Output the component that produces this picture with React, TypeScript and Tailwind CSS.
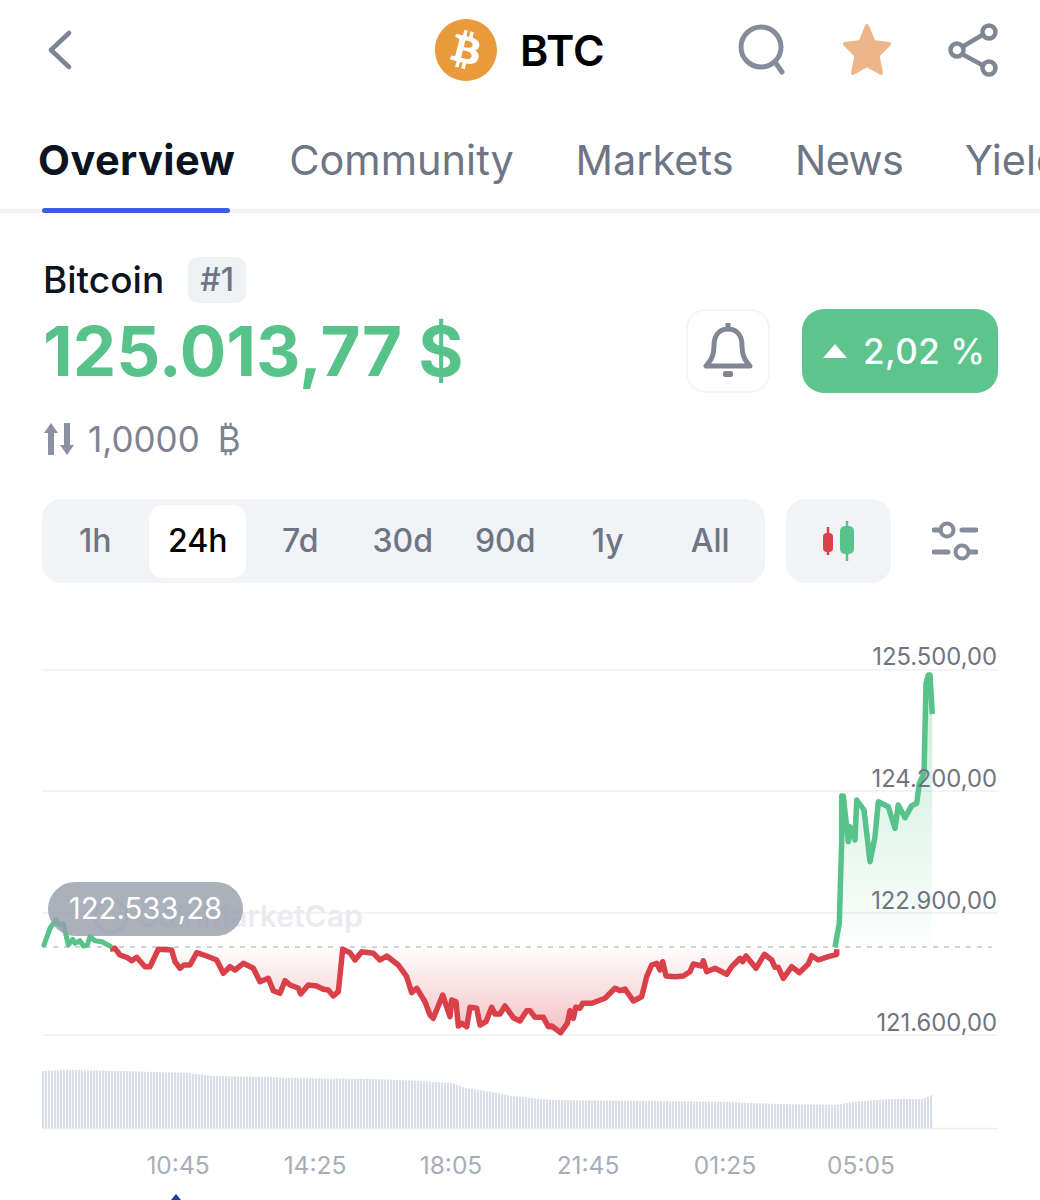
import { FaBitcoin } from 'react-icons/fa';

type Pt = [number, number];

// points read off the chart, in crop coordinates at 3x
const trace = (ox: number, oy: number, pts: Pt[]): Pt[] => pts.map(([x, y]) => [ox + x / 3, oy + y / 3]);

const greenStart = trace(30, 870, [
  [42, 225], [60, 175], [78, 150], [88, 165], [100, 160], [115, 225], [128, 208], [135, 220], [150, 212], [160, 228],
  [172, 225], [180, 200], [195, 212], [215, 215], [240, 228],
]);

const redLeft = trace(30, 870, [
  [240, 238], [255, 235], [270, 255], [290, 262], [305, 272], [320, 262], [345, 290], [360, 290], [385, 238], [425, 240],
  [435, 275], [450, 295], [462, 285], [480, 285], [500, 248], [530, 258], [560, 270], [580, 310], [600, 290], [615, 300],
  [640, 280], [670, 295], [690, 335], [715, 325], [730, 362], [750, 370], [765, 332], [780, 345], [805, 355], [812, 372],
  [835, 345], [860, 348], [880, 358], [895, 360], [910, 378], [925, 365], [938, 238], [960, 248], [975, 270], [995, 245],
  [1030, 250], [1050, 270], [1070, 258], [1105, 285], [1130, 320], [1145, 368], [1160, 355], [1185, 395],
]);

const redRight = trace(430, 920, [
  [0, 285], [10, 295], [38, 225], [60, 290], [65, 240], [78, 245], [85, 318], [95, 310], [110, 320], [120, 262],
  [140, 265], [150, 315], [168, 305], [185, 262], [195, 282], [210, 282], [225, 258], [250, 293], [270, 303], [290, 272],
  [300, 272], [315, 292], [340, 292], [355, 320], [365, 318], [392, 338], [412, 310], [420, 272], [430, 295], [437, 262],
  [450, 265], [458, 250], [485, 250], [525, 235], [555, 205], [570, 212], [585, 207], [610, 243], [635, 230], [650, 170],
  [665, 135], [680, 130], [690, 150], [698, 125], [708, 168], [735, 170], [760, 168], [780, 155], [790, 132], [815, 138],
  [820, 122], [830, 155], [855, 145], [890, 163], [905, 140], [930, 115], [938, 125], [948, 108], [978, 145], [1003, 103],
  [1025, 120], [1035, 142], [1045, 142], [1060, 175], [1085, 140], [1108, 158], [1135, 132], [1145, 107], [1165, 120], [1195, 110],
  [1220, 103], [1220, 88],
]);

const greenEnd = trace(800, 640, [
  [105, 922], [118, 850], [125, 600], [125, 468], [130, 468], [145, 605], [150, 560], [165, 600], [170, 480], [192, 510],
  [210, 665], [225, 590], [235, 485], [265, 500], [285, 565], [295, 495], [315, 533], [335, 497], [350, 490], [358, 430],
  [372, 400], [378, 130], [385, 105], [390, 105], [397, 222],
]);

const red = [...redLeft, ...redRight];
const toLine = (pts: Pt[]) => pts.map(([x, y]) => `${x.toFixed(1)},${y.toFixed(1)}`).join(' ');

const volumeTop: Pt[] = [
  [42, 1071], [66, 1070], [119, 1071], [186, 1073], [212, 1076], [265, 1077], [285, 1078], [371, 1079], [398, 1080], [451, 1083],
  [464, 1088], [491, 1092], [511, 1096], [550, 1100], [729, 1102], [776, 1104], [835, 1105], [852, 1102], [889, 1099], [922, 1099],
  [933, 1094],
];

const volumeAt = (x: number) => {
  for (let i = 1; i < volumeTop.length; i++) {
    const [x0, y0] = volumeTop[i - 1];
    const [x1, y1] = volumeTop[i];
    if (x <= x1) return y0 + ((x - x0) / (x1 - x0)) * (y1 - y0);
  }
  return 1094;
};

const bars = Array.from({ length: 297 }, (_, i) => 42 + i * 3);

const grid = [670, 791, 913, 1035];
const prices = [
  { label: '125.500,00', cls: 'top-[41px]' },
  { label: '124.200,00', cls: 'top-[163px]' },
  { label: '122.900,00', cls: 'top-[285px]' },
  { label: '121.600,00', cls: 'top-[407px]' },
];

const tabs = [
  { label: 'Community', cls: '' },
  { label: 'Markets', cls: '' },
  { label: 'News', cls: 'tracking-[-0.6px]' },
  { label: 'Yield', cls: '' },
];
const ranges = ['1h', '24h', '7d', '30d', '90d', '1y', 'All'];
const times = [
  { label: '10:45', cls: 'left-[178px]' },
  { label: '14:25', cls: 'left-[315px]' },
  { label: '18:05', cls: 'left-[451px]' },
  { label: '21:45', cls: 'left-[588px]' },
  { label: '01:25', cls: 'left-[725px]' },
  { label: '05:05', cls: 'left-[861px]' },
];

function Chart() {
  return (
    <svg width="1040" height="600" viewBox="0 600 1040 600" className="block">
      <defs>
        <linearGradient id="redFill" gradientUnits="userSpaceOnUse" x1="0" y1="947" x2="0" y2="1032">
          <stop offset="0" stopColor="#dc3f49" stopOpacity="0.01" />
          <stop offset="1" stopColor="#dc3f49" stopOpacity="0.32" />
        </linearGradient>
        <linearGradient id="greenFill" gradientUnits="userSpaceOnUse" x1="0" y1="690" x2="0" y2="947">
          <stop offset="0" stopColor="#57c28a" stopOpacity="0.3" />
          <stop offset="1" stopColor="#57c28a" stopOpacity="0.02" />
        </linearGradient>
      </defs>

      {grid.map((y) => (
        <line key={y} x1="42" x2="998" y1={y} y2={y} stroke="#eef0f4" strokeWidth="1.5" />
      ))}
      <line x1="42" x2="998" y1="1128.5" y2="1128.5" stroke="#eef0f4" strokeWidth="1.5" />

      {bars.map((x) => (
        <rect key={x} x={x} y={volumeAt(x)} width="2.2" height={1128 - volumeAt(x)} fill="#d9deea" />
      ))}

      <polygon points={`${toLine(red)} 110,947`} fill="url(#redFill)" />
      <polygon points={`${toLine(greenEnd)} 932,947 835,947`} fill="url(#greenFill)" />

      <line x1="42" x2="992" y1="947" y2="947" stroke="#d0d3da" strokeWidth="2" strokeDasharray="5 6" />

      <polyline points={toLine(red)} fill="none" stroke="#d9404a" strokeWidth="5.5" strokeLinejoin="round" />
      <polyline points={toLine(greenStart)} fill="none" stroke="#57c28a" strokeWidth="5" strokeLinejoin="round" strokeLinecap="round" />
      <polyline points={toLine(greenEnd)} fill="none" stroke="#57c28a" strokeWidth="5.5" strokeLinejoin="round" />

      <path d="M176 1194 L171 1200 L181 1200 Z" fill="#2338a8" />
    </svg>
  );
}

export default function App() {
  return (
    <div className="relative h-[1200px] w-[1040px] overflow-hidden bg-white font-['Inter',sans-serif]">
      {/* top bar */}
      <div className="flex h-[100px] items-center">
        <svg width="28" height="40" viewBox="0 0 28 40" fill="none" className="ml-[46px] mr-[360px]">
          <path d="M23 3 L5 20 L23 37" stroke="#7c8392" strokeWidth="4.5" strokeLinecap="round" strokeLinejoin="round" />
        </svg>
        <FaBitcoin className="h-[64px] w-[64px] rounded-full bg-white text-[#e99a3a]" />
        <span className="ml-[22px] w-[216px] text-[43px] font-semibold leading-none text-black">BTC</span>
        <svg width="52" height="54" viewBox="0 0 52 54" fill="none">
          <circle cx="25" cy="24" r="20" stroke="#858c9a" strokeWidth="5" />
          <path d="M39 39 L46 49" stroke="#858c9a" strokeWidth="5" strokeLinecap="round" />
        </svg>
        <svg width="56" height="56" viewBox="0 0 56 56" className="ml-[51px]">
          <path
            d="M28 4 L34.5 20 L50 22 L38.5 33.5 L42 51 L28 43 L14 51 L17.5 33.5 L6 22 L21.5 20 Z"
            fill="#edb688"
            stroke="#edb688"
            strokeWidth="4"
            strokeLinejoin="round"
          />
        </svg>
        <svg width="52" height="54" viewBox="0 0 52 54" fill="none" className="ml-[53px]">
          <path d="M14 24 L36 11 M14 31 L36 43" stroke="#7f8694" strokeWidth="4.5" />
          <circle cx="41" cy="9" r="6.5" stroke="#7f8694" strokeWidth="4.5" />
          <circle cx="9" cy="27" r="6.5" stroke="#7f8694" strokeWidth="4.5" />
          <circle cx="41" cy="45" r="6.5" stroke="#7f8694" strokeWidth="4.5" />
        </svg>
      </div>

      {/* tabs */}
      <div className="relative h-[113px] border-b-[4px] border-[#f1f3f7]">
        <div className="flex items-center gap-[61.5px] whitespace-nowrap pl-[38px] pt-[37px] text-[41.5px] leading-[46px] text-[#6e7585]">
          <span className="-mr-[7.5px] font-bold tracking-[0.4px] text-[#0d1421]">Overview</span>
          {tabs.map((t) => (
            <span key={t.label} className={t.cls}>
              {t.label}
            </span>
          ))}
        </div>
        <div className="absolute -bottom-[4px] left-[42px] h-[5px] w-[188px] rounded-sm bg-[#3e5de0]" />
      </div>

      {/* price block */}
      <div className="flex items-start justify-between pl-[43px] pr-[42px] pt-[44px]">
        <div>
          <div className="flex items-center gap-[24px]">
            <span className="text-[37px] font-medium leading-[46px] text-[#0d1421]">Bitcoin</span>
            <span className="flex h-[46px] w-[58px] items-center justify-center rounded-[10px] bg-[#eff2f5] text-[32px] font-medium text-[#6e7585]">
              #1
            </span>
          </div>
          <div className="mt-[8px] text-[69px] font-bold leading-[80px] text-[#57c28a]">125.013,77 $</div>
          <div className="mt-[26px] flex items-center text-[35px] leading-[44px] text-[#7c8392]">
            <svg width="32" height="34" viewBox="0 0 32 34" className="mr-[13px]" fill="#8a91a0">
              <path d="M8 1 L15 11 H11 V33 H5 V11 H1 Z" />
              <path d="M24 33 L31 23 H27 V1 H21 V23 H17 Z" />
            </svg>
            <span>1,0000</span>
            <span className="ml-[18px]">₿</span>
          </div>
        </div>
        <div className="mt-[52px] flex gap-[32px]">
          <div className="flex h-[84px] w-[84px] items-center justify-center rounded-[20px] border-2 border-[#f3f5f8]">
            <svg width="50" height="56" viewBox="0 0 50 56" fill="none">
              <path
                d="M25 6 C15 6 11 14 11 23 C11 33 8 37 3 43 H47 C42 37 39 33 39 23 C39 14 35 6 25 6 Z"
                stroke="#7f8694"
                strokeWidth="5"
                strokeLinejoin="round"
              />
              <path d="M25 1 V6" stroke="#7f8694" strokeWidth="5" strokeLinecap="round" />
              <rect x="20" y="48" width="10" height="6" rx="2" fill="#7f8694" />
            </svg>
          </div>
          <div className="flex h-[84px] w-[196px] items-center gap-[15px] rounded-[22px] bg-[#5cc48c] pl-[20px] text-[35px] font-medium text-white">
            <svg width="26" height="16" viewBox="0 0 26 16" fill="white">
              <path d="M13 1 L25 15 H1 Z" />
            </svg>
            <span className="tracking-[0.5px]">2,02 %</span>
          </div>
        </div>
      </div>

      {/* range selector */}
      <div className="mt-[38px] flex items-center pl-[42px]">
        <div className="flex h-[84px] w-[723px] items-center rounded-[20px] bg-[#f1f3f7] px-[2px] text-[32px] font-medium text-[#6e7585]">
          {ranges.map((r) =>
            r === '24h' ? (
              <div key={r} className="flex h-[73px] w-[102.5px] items-center justify-center">
                <span className="flex h-[73px] w-[97px] items-center justify-center rounded-[14px] bg-white text-black">{r}</span>
              </div>
            ) : (
              <span key={r} className="w-[102.5px] text-center">
                {r}
              </span>
            ),
          )}
        </div>
        <div className="ml-[21px] flex h-[84px] w-[105px] items-center justify-center rounded-[20px] bg-[#f1f3f7]">
          <svg width="36" height="40" viewBox="0 0 36 40">
            <path d="M7 6 V34" stroke="#d9404a" strokeWidth="2.5" />
            <rect x="2" y="12" width="10" height="19" rx="4" fill="#d9404a" />
            <path d="M26 0 V40" stroke="#57c28a" strokeWidth="2.5" />
            <rect x="19" y="5" width="14" height="28" rx="5" fill="#57c28a" />
          </svg>
        </div>
        <svg width="46" height="40" viewBox="0 0 46 40" fill="none" className="ml-[41px]">
          <circle cx="15" cy="9" r="6.5" stroke="#858c9a" strokeWidth="4" />
          <path d="M2 9 H8 M30 9 H44" stroke="#858c9a" strokeWidth="5" strokeLinecap="round" />
          <circle cx="30" cy="31" r="6.5" stroke="#858c9a" strokeWidth="4" />
          <path d="M2 31 H16 M38 31 H44" stroke="#858c9a" strokeWidth="5" strokeLinecap="round" />
        </svg>
      </div>

      {/* chart, starts at y=600 */}
      <div className="absolute left-0 top-[600px] h-[600px] w-[1040px]">
        <Chart />
        {prices.map((p) => (
          <span key={p.label} className={`absolute right-[43px] text-[23.8px] leading-[32px] text-[#6f7480] ${p.cls}`}>
            {p.label}
          </span>
        ))}
        {times.map((t) => (
          <span key={t.label} className={`absolute top-[549px] -translate-x-1/2 text-[24.5px] leading-[32px] text-[#a8adb7] ${t.cls}`}>
            {t.label}
          </span>
        ))}
        {/* watermark */}
        <div className="absolute left-[92px] top-[294px] flex items-center gap-[6px] text-[30px] font-semibold leading-[44px] text-[#e9ebef]">
          <svg width="38" height="38" viewBox="0 0 38 38" fill="none">
            <circle cx="19" cy="19" r="16" stroke="#e3e5ea" strokeWidth="4" />
          </svg>
          <span>CoinMarketCap</span>
        </div>
        <div className="absolute left-[48px] top-[282px] flex h-[54px] w-[195px] items-center justify-center rounded-full bg-[#969daa]/80 text-[29.3px] text-white">
          122.533,28
        </div>
      </div>
    </div>
  );
}
